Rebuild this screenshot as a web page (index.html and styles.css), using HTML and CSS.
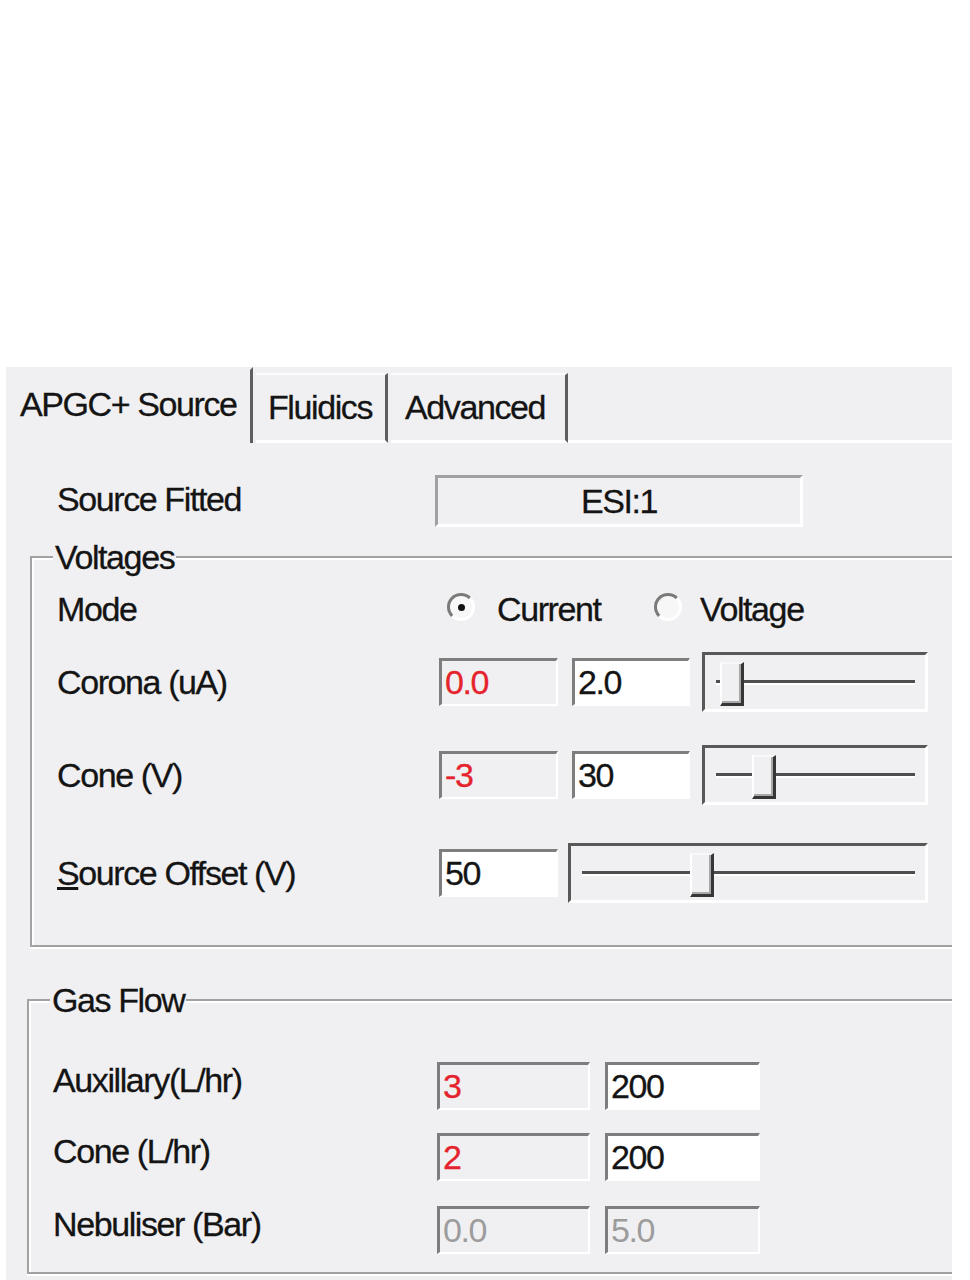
FILE: index.html
```html
<!DOCTYPE html>
<html>
<head>
<meta charset="utf-8">
<title>Source</title>
<link rel="stylesheet" href="styles.css">
</head>
<body>
<div class="window">
  <div class="tabs">
    <div class="tab tab-active">APGC+ Source</div>
    <div class="tab tab-fluidics">Fluidics</div>
    <div class="tab tab-advanced">Advanced</div>
    <div class="tab-fill"></div>
  </div>
  <div class="content">
    <div class="fitted">
      <div class="fitted-label">Source Fitted</div>
      <div class="esi">ESI:1</div>
    </div>

    <fieldset class="group group-volt">
      <legend>Voltages</legend>
      <div class="row row-mode">
        <div class="row-label">Mode</div>
        <div class="opt opt-current"><span class="radio radio-on"><span class="dot"></span></span><span class="opt-text">Current</span></div>
        <div class="opt opt-voltage"><span class="radio"></span><span class="opt-text opt-text2">Voltage</span></div>
      </div>
      <div class="row row-slider row-corona">
        <div class="row-label">Corona (uA)</div>
        <div class="field field-ro field-a red">0.0</div>
        <div class="field field-b">2.0</div>
        <div class="slider slider-short"><div class="track"></div><div class="thumb" style="left:15px"></div></div>
      </div>
      <div class="row row-slider row-cone">
        <div class="row-label">Cone (V)</div>
        <div class="field field-ro field-a red">-3</div>
        <div class="field field-b">30</div>
        <div class="slider slider-short"><div class="track"></div><div class="thumb" style="left:47px"></div></div>
      </div>
      <div class="row row-slider row-offset">
        <div class="row-label"><u>S</u>ource Offset (V)</div>
        <div class="field field-a field-a2">50</div>
        <div class="slider slider-long"><div class="track"></div><div class="thumb" style="left:119px"></div></div>
      </div>
    </fieldset>

    <fieldset class="group group-gas">
      <legend>Gas Flow</legend>
      <div class="grow">
        <div class="grow-label">Auxillary(L/hr)</div>
        <div class="field field-ro gfield-a red">3</div>
        <div class="field gfield-b">200</div>
      </div>
      <div class="grow grow2">
        <div class="grow-label">Cone (L/hr)</div>
        <div class="field field-ro gfield-a red">2</div>
        <div class="field gfield-b">200</div>
      </div>
      <div class="grow grow3">
        <div class="grow-label">Nebuliser (Bar)</div>
        <div class="field field-ro gfield-a disabled">0.0</div>
        <div class="field field-ro gfield-b disabled">5.0</div>
      </div>
    </fieldset>
  </div>
</div>
</body>
</html>
```

FILE: styles.css
```css
html, body {
  margin: 0;
  padding: 0;
  background: #ffffff;
}

body {
  font-family: "Liberation Sans", Arial, sans-serif;
  font-size: 34px;
  letter-spacing: -1.4px;
  color: #141414;
  -webkit-text-stroke: 0.3px currentColor;
}

.window {
  margin: 367px 0 0 6px;
  width: 946px;
  height: 913px;
  background: #f0f0f2;
  overflow: hidden;
}

/* Tabs */
.tabs {
  display: flex;
  align-items: flex-end;
  height: 76px;
}

.tab {
  box-sizing: border-box;
  display: flex;
  align-items: center;
  white-space: nowrap;
}

.tab-active {
  width: 247px;
  height: 76px;
  padding: 0 0 4px 14px;
  border-right: 3px solid #5e5e5e;
  border-top: 3px solid #f0f0f2;
}

.tab-fluidics,
.tab-advanced {
  height: 70px;
  margin-left: 3px;
  padding-left: 12px;
  border-top: 2px solid #fbfbfb;
  border-right: 3px solid #5e5e5e;
  border-bottom: 3px solid #ffffff;
}

.tab-fluidics { width: 132px; }
.tab-advanced { width: 177px; padding-left: 14px; }

.tab-fill {
  flex: 1;
  height: 0;
  border-bottom: 3px solid #ffffff;
}

/* Content */
.content {
  padding: 32px 0 0 24px;
}

.fitted {
  display: flex;
  align-items: center;
  height: 52px;
  padding-left: 27px;
}

.fitted-label {
  width: 378px;
  padding-bottom: 4px;
}

.esi {
  box-sizing: border-box;
  width: 368px;
  height: 52px;
  border-style: solid;
  border-width: 3px;
  border-color: #a0a0a0 #ffffff #ffffff #a0a0a0;
  display: flex;
  align-items: center;
  justify-content: center;
}

/* Group boxes */
.group {
  min-width: 0;
  margin: 0 -20px 0 0;
  padding: 0;
  border: 2px solid #a2a2a2;
  border-right: 0;
  box-shadow: inset 2px 2px 0 #ffffff, 0 2px 0 #ffffff;
}

.group legend {
  margin-left: 21px;
  padding: 0 2px;
  line-height: 34px;
  background: #f0f0f2;
}

.group-volt {
  margin-top: 13px;
  padding: 12px 0 42px 0;
}

.group-gas {
  margin: 36px -20px 0 -3px;
  padding: 45px 0 18px 0;
}

/* Voltage rows */
.row {
  display: flex;
  align-items: center;
  padding-left: 25px;
}

.row-label {
  width: 382px;
  flex: none;
  white-space: nowrap;
}

.row-mode { height: 46px; }
.row-slider { height: 60px; }
.row-corona { margin-top: 20px; }
.row-cone { margin-top: 33px; }
.row-offset { margin-top: 38px; }

.opt {
  display: flex;
  align-items: center;
}

.opt-current { width: 215px; padding-left: 8px; box-sizing: border-box; }

.opt-text { margin-left: 22px; }
.opt-text2 { margin-left: 18px; }

.radio {
  box-sizing: border-box;
  width: 28px;
  height: 28px;
  border-radius: 50%;
  border: 3px solid;
  border-color: #7a7a7a #ffffff #ffffff #7a7a7a;
  background: #f7f7f8;
  display: flex;
  align-items: center;
  justify-content: center;
  margin-top: -4px;
}

.dot {
  width: 7px;
  height: 7px;
  border-radius: 50%;
  background: #111111;
}

/* Edit fields */
.field {
  box-sizing: border-box;
  height: 48px;
  flex: none;
  border-style: solid;
  border-width: 3px 2px 2px 3px;
  border-color: #7e7e7e #ffffff #ffffff #7e7e7e;
  background: #ffffff;
  padding-left: 3px;
  display: flex;
  align-items: center;
  white-space: nowrap;
}

.field-ro { background: #f0f0f2; }

.red { color: #e5232c; }
.disabled { color: #9c9c9c; -webkit-text-stroke: 0; }

.field-a { width: 119px; margin-right: 14px; }
.field-a2 { margin-right: 10px; }
.field-b { width: 118px; margin-right: 12px; }

/* Sliders */
.slider {
  position: relative;
  box-sizing: border-box;
  height: 60px;
  flex: none;
  border-style: solid;
  border-width: 3px;
  border-color: #585858 #ffffff #ffffff #585858;
}

.slider-short { width: 226px; }
.slider-long { width: 360px; }

.track {
  margin: 25px 10px 0 11px;
  height: 3px;
  background: #4e4e4e;
  box-shadow: 0 2px 0 #ffffff;
}

.thumb {
  position: absolute;
  top: 7px;
  box-sizing: border-box;
  width: 24px;
  height: 44px;
  background: #f0f0f2;
  border-left: 2px solid #ffffff;
  border-top: 2px solid #f8f8f8;
  border-right: 3px solid #363636;
  border-bottom: 3px solid #363636;
  box-shadow: inset -2px -2px 0 #a8a8a8;
}

/* Gas flow rows */
.grow {
  display: flex;
  align-items: flex-start;
  height: 48px;
  padding-left: 24px;
}

.grow2 { margin-top: 23px; }
.grow3 { margin-top: 25px; }

.grow-label {
  width: 384px;
  flex: none;
  line-height: 36px;
  white-space: nowrap;
}

.gfield-a { width: 153px; margin-right: 15px; }
.gfield-b { width: 155px; }
```
